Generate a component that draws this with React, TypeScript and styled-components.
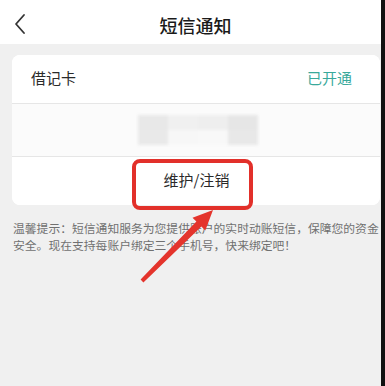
import React from "react";
import styled, { createGlobalStyle } from "styled-components";

const Global = createGlobalStyle`
  html, body { margin: 0; padding: 0; background: #f0f0f0; }
  body { font-family: "Noto Sans CJK SC", "Noto Sans", sans-serif; }
`;

const Page = styled.div`
  position: relative;
  width: 385px;
  height: 386px;
  box-sizing: border-box;
  background: #f0f0f0;
  border-right: 4px solid #111;
  overflow: hidden;
`;

const Header = styled.header`
  height: 44px;
  background: #fff;
  display: flex;
  align-items: center;
  justify-content: center;
  position: relative;
`;

const Back = styled.button`
  position: absolute;
  left: 11px;
  top: 13px;
  width: 18px;
  height: 22px;
  padding: 0;
  border: 0;
  background: transparent;
  display: flex;
  align-items: center;
  justify-content: center;
`;

const Title = styled.h1`
  margin: 0;
  font-size: 18px;
  font-weight: 500;
  color: #1a1a1a;
  margin-left: 10px;
  margin-top: 6px;
`;

const Card = styled.section`
  margin: 11px 1px 0 12px;
  background: #fff;
  border-radius: 8px;
  overflow: hidden;
`;

const Row = styled.div<{ $h: number; $center?: boolean; $bg?: string }>`
  height: ${(p) => p.$h}px;
  display: flex;
  align-items: center;
  justify-content: ${(p) => (p.$center ? "center" : "space-between")};
  padding: 0 28px 0 19px;
  background: ${(p) => p.$bg || "#fff"};
  border-bottom: 1px solid #e6e6e6;
  &:last-child { border-bottom: 0; }
`;

const Label = styled.span`
  font-size: 15px;
  color: #2a2a2a;
  margin-top: -3px;
`;

const Status = styled.span`
  font-size: 15px;
  color: #3aa99b;
  margin-top: -3px;
`;

const Action = styled.span`
  font-size: 15px;
  color: #2a2a2a;
  margin-left: 10px;
  margin-top: -4px;
`;

const BlurRow = styled(Row)`
  padding: 0;
  justify-content: flex-start;
`;

const Blur = styled.div`
  display: grid;
  grid-template-columns: 30px 30px 30px 30px;
  grid-template-rows: 15px 15px;
  margin-left: 126px;
  filter: blur(1.5px);
`;

const Cell = styled.div<{ $c: string }>`
  background: ${(p) => p.$c};
`;

const Tip = styled.p`
  margin: 14px 0 0 13px;
  width: 369px;
  font-size: 11.8px;
  line-height: 17px;
  color: #707070;
`;

const Overlay = styled.svg`
  position: absolute;
  left: 0;
  top: 0;
  pointer-events: none;
`;

export default function App() {
  const cells = ["#e8e8e8", "#f0f0f0", "#eeeeee", "#e6e6e6", "#e9e9e9", "#f7f7f7", "#f8f8f8", "#e8e8e8"];
  return (
    <>
      <Global />
      <Page>
        <Header>
          <Back aria-label="back">
            <svg width="14" height="22" viewBox="0 0 14 22">
              <path d="M11 2 L3 11 L11 20" fill="none" stroke="#333" strokeWidth="1.8" strokeLinecap="round" strokeLinejoin="round" />
            </svg>
          </Back>
          <Title>短信通知</Title>
        </Header>
        <Card>
          <Row $h={48}>
            <Label>借记卡</Label>
            <Status>已开通</Status>
          </Row>
          <BlurRow $h={52} $bg="#fbfbfb">
            <Blur>
              {cells.map((c, i) => (
                <Cell key={i} $c={c} />
              ))}
            </Blur>
          </BlurRow>
          <Row $h={48} $center>
            <Action>维护/注销</Action>
          </Row>
        </Card>
        <Tip>温馨提示：短信通知服务为您提供账户的实时动账短信，保障您的资金安全。现在支持每账户绑定三个手机号，快来绑定吧！</Tip>
        <Overlay width="385" height="386" viewBox="0 0 385 386">
          <rect x="134" y="161" width="117" height="47" rx="6" fill="none" stroke="#e2302a" strokeWidth="4" />
          <polygon
            points="140.6,279.6 196.4,221.6 192.5,217.7 213,210 205.3,230.5 201.4,226.6 143.4,282.4"
            fill="#e4342c"
          />
        </Overlay>
      </Page>
    </>
  );
}
